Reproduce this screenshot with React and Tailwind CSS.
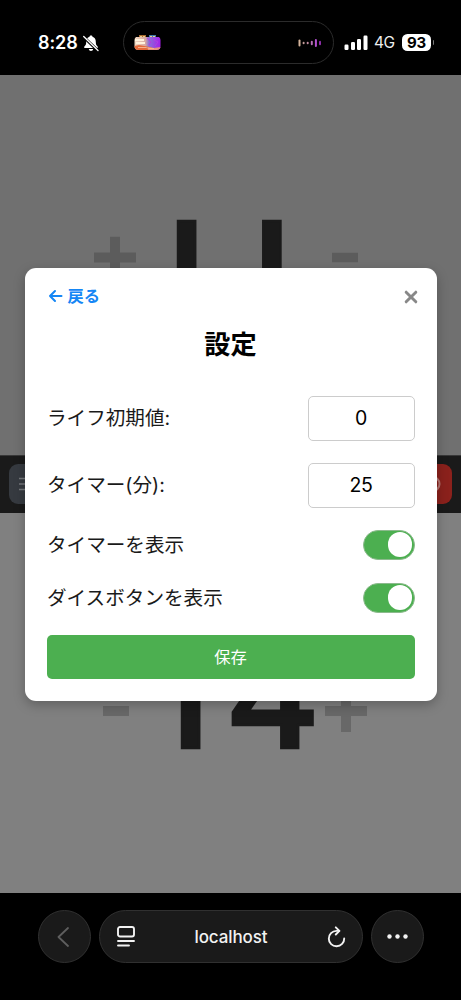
function StatusBar() {
  return (
    <header className="flex h-[75px] shrink-0 items-center bg-black pt-[10px] pl-[38px] text-white">
      <span className="w-[41px] pt-[1px] text-[18px] leading-none font-semibold tracking-[-0.1px]">8:28</span>
      <svg className="ml-[3px] h-[18px] w-[18px]" viewBox="0 0 18 18">
        <path d="M9 1.500c.9 0 1.400.500 1.500 1.200 2.200.800 3.300 2.500 3.300 5 0 2.600.500 3.500 1.800 4.800.700.700.400 1.500-.600 1.500H3c-1 0-1.300-.8-.6-1.500 1.300-1.300 1.800-2.200 1.800-4.800 0-2.500 1.100-4.200 3.300-5C7.600 2 8.100 1.500 9 1.500z" fill="#fff" />
        <path d="M6.800 15h4.400c-.2 1.200-1 2-2.200 2s-2-.8-2.200-2z" fill="#fff" />
        <path d="M1.700 3l14 13.500" stroke="#000" strokeWidth="3" />
        <path d="M1.700 2.500l14.300 14" stroke="#fff" strokeWidth="1.300" strokeLinecap="round" />
      </svg>
      <div className="ml-[23px] flex h-[43px] w-[211px] shrink-0 items-center justify-between rounded-full border border-[#2b2b2b] pr-[11px] pl-[10px]">
        <svg className="h-[16px] w-[27px]" viewBox="0 0 27 16">
          <defs>
            <linearGradient id="art" x1="0" x2="1" y1="0" y2="0">
              <stop offset="0" stopColor="#f3dcc5" />
              <stop offset=".42" stopColor="#d9aaa0" />
              <stop offset=".55" stopColor="#8b6fd8" />
              <stop offset="1" stopColor="#a51be8" />
            </linearGradient>
            <clipPath id="artClip"><rect x=".5" y="1.500" width="26" height="13.500" rx="4" /></clipPath>
          </defs>
          <rect x="5" y="0" width="7" height="4" fill="#a96b2e" />
          <rect x="15" y="0" width="7" height="4" fill="#3e78a8" />
          <g clipPath="url(#artClip)">
            <rect y="2" width="27" height="13" fill="url(#art)" />
            <path d="M0 11l5-1 8 1.500 5 1v3H0z" fill="#e56a3b" />
            <path d="M14 12l6 1 7-1v4H14z" fill="#e8917e" />
            <path d="M4 12.500h8l3 1h5" stroke="#f7b08d" />
            <path d="M13 3l4 4-2 3M20 5l4 2-3 4" stroke="#b23ee0" fill="none" />
            <path d="M1 5h9M2 8h9" stroke="#fff2dc" strokeWidth="2" />
          </g>
          <path d="M6 1.500h5M16 1.500h5" stroke="#e9cf8a" strokeDasharray="2 1" />
        </svg>
        <svg className="h-[10px] w-[24px]" viewBox="0 0 24 10" fill="none" strokeWidth="2" strokeLinecap="round">
          <path d="M1.500 2.500v5" stroke="#d5b49b" />
          <path d="M5.600 4.800v.4" stroke="#c29a98" />
          <path d="M9.700 4.800v.4" stroke="#c28aa0" />
          <path d="M13.800 3.800v2.400" stroke="#b56eb5" />
          <path d="M17.900 2v6" stroke="#b450cf" />
          <path d="M22 3.800v2.400" stroke="#8c2da8" />
        </svg>
      </div>
      <svg className="ml-[10px] h-[16px] w-[24px] shrink-0" viewBox="0 0 24 16" fill="#fff">
        <rect x="0.500" y="9.500" width="4" height="5.500" rx="1.200" />
        <rect x="7" y="7" width="4" height="8" rx="1.200" />
        <rect x="13" y="4" width="4" height="11" rx="1.200" />
        <rect x="19.500" y="0.500" width="4" height="14.500" rx="1.200" />
      </svg>
      <span className="ml-[6px] w-[22px] pt-[1px] text-[15.500px] leading-none tracking-[-0.4px] text-[#eee]">4G</span>
      <span className="ml-[6px] flex h-[17px] w-[29px] shrink-0 items-center justify-center rounded-[5.500px] bg-white text-[15px] leading-none font-bold tracking-[-0.3px] text-black">93</span>
      <span className="ml-[1.500px] h-[5px] w-[1.500px] rounded-r-full bg-[#777]" />
    </header>
  );
}

function PlayerHalf({ life, flipped }) {
  const [first, ...rest] = life;
  return (
    <section
      className={
        flipped
          ? "flex h-[380.5px] shrink-0 rotate-180 items-center justify-center bg-[#707070]"
          : "flex h-[380.5px] shrink-0 items-center justify-center bg-[#808080]"
      }
    >
      <button aria-label="minus" className="flex w-[42px] justify-center pt-[16px]">
        <svg className={flipped ? "h-[10px] w-[26px] text-[#5c5c5c]" : "h-[10px] w-[26px] text-[#686868]"} viewBox="0 0 26 10">
          <path d="M0 0h26v10H0z" fill="currentColor" />
        </svg>
      </button>
      <span
        className={
          flipped
            ? "flex w-[188px] justify-center pr-[9px] pb-[24px] font-['Open_Sans','Noto_Sans',sans-serif] text-[149px] leading-[168px] font-semibold text-[#1a1a1a] [-webkit-text-stroke:2.5px_#1a1a1a]"
            : "flex w-[188px] justify-center pr-[3.5px] pb-[24px] font-['Open_Sans','Noto_Sans',sans-serif] text-[149px] leading-[168px] font-semibold text-[#1a1a1a] [-webkit-text-stroke:2.5px_#1a1a1a]"
        }
      >
        <span className={flipped ? "" : "mr-[2.5px]"}>{first}</span>
        <span>{rest.join("")}</span>
      </span>
      <button aria-label="plus" className="flex w-[42px] justify-center pt-[16px]">
        <svg className={flipped ? "h-[42px] w-[42px] text-[#5c5c5c]" : "h-[42px] w-[42px] text-[#686868]"} viewBox="0 0 42 42">
          <path d="M16 0h10v16h16v10H26v16H16V26H0V16h16z" fill="currentColor" />
        </svg>
      </button>
    </section>
  );
}

function ControlBar() {
  return (
    <div className="flex h-[57px] shrink-0 items-center justify-between bg-[#1a1a1a] px-[9px]">
      <button aria-label="menu" className="flex h-10 w-10 items-center rounded-[9px] bg-[#363a40] pl-[10px]">
        <svg className="h-[16px] w-[20px]" viewBox="0 0 20 16" stroke="#74777b" strokeWidth="1.500">
          <path d="M0 2.500h20M0 8h20M0 13.500h20" />
        </svg>
      </button>
      <button aria-label="reset" className="flex h-10 w-10 items-center justify-end rounded-[9px] bg-[#8b211c] pr-[11px]">
        <svg className="h-[18px] w-[18px]" viewBox="0 0 18 18" fill="none" stroke="#b57773" strokeWidth="2">
          <circle cx="9" cy="9" r="7.500" />
        </svg>
      </button>
    </div>
  );
}

function NumberRow({ label, value }) {
  return (
    <div className="flex h-[45px] items-center justify-between">
      <span className="pt-[1px] pl-[0.5px]">{label}</span>
      <div className="flex h-[45px] w-[107px] items-center justify-center rounded-[5px] border border-[#ccc] pt-[2px] text-[19.500px] tracking-[-0.3px] text-black">
        {value}
      </div>
    </div>
  );
}

function ToggleRow({ label }) {
  return (
    <div className="flex h-[30px] items-center justify-between">
      <span className="pt-[2px] pl-[0.5px]">{label}</span>
      <span className="flex h-[30px] w-[52px] items-center justify-end rounded-full border border-[#8cba8d] bg-[#4caf50] pr-[1.5px]">
        <span className="h-[24.500px] w-[24.500px] rounded-full bg-white" />
      </span>
    </div>
  );
}

function SettingsDialog() {
  return (
    <div role="dialog" className="flex h-[433px] w-[412px] flex-col rounded-[11px] bg-white px-[22px] text-[19.600px] leading-none text-[#1a1a1a] shadow-[0_4px_12px_rgba(0,0,0,0.25)]">
      <div className="flex h-[58px] items-center justify-between">
        <button className="flex items-center gap-[5px] pl-[1px] text-[16.300px] font-semibold text-[#1586f5]">
          <svg className="-mt-[1px] h-[14px] w-[15px]" viewBox="0 0 15 14" fill="none" stroke="currentColor" strokeWidth="2" strokeLinecap="round" strokeLinejoin="round">
            <path d="M13.500 7H2M7 2L2 7l5 5" />
          </svg>
          <span>戻る</span>
        </button>
        <button aria-label="close" className="-mr-[3px] flex h-[14px] w-[14px] items-center justify-center">
          <svg className="h-[14px] w-[14px]" viewBox="0 0 13 13" fill="none" stroke="#888" strokeWidth="2.700" strokeLinecap="round">
            <path d="M2 2l9 9M11 2l-9 9" />
          </svg>
        </button>
      </div>
      <h2 className="flex h-[38px] items-center justify-center pt-[1px] text-[26.200px] font-bold text-black">設定</h2>
      <div className="mt-[32px] flex flex-col gap-[22px]">
        <NumberRow label="ライフ初期値:" value="0" />
        <NumberRow label="タイマー(分):" value="25" />
        <ToggleRow label="タイマーを表示" />
      </div>
      <div className="mt-[23px]">
        <ToggleRow label="ダイスボタンを表示" />
      </div>
      <button className="mt-[22px] flex h-[44px] shrink-0 items-center justify-center rounded-[5px] bg-[#4caf50] pt-[1px] text-[16.300px] text-white">保存</button>
    </div>
  );
}

function BrowserBar() {
  return (
    <footer className="flex h-[107px] shrink-0 items-start bg-black pt-[17px] pl-[38px] text-white">
      <button aria-label="back" className="flex h-[53px] w-[53px] items-center justify-center rounded-full border border-[#303030] bg-[#1a1a1a]">
        <svg className="-ml-[3px] h-[20px] w-[12px]" viewBox="0 0 12 20" fill="none" stroke="#5e5e5e" strokeWidth="1.800" strokeLinecap="round" strokeLinejoin="round">
          <path d="M11 1L1.500 10l9.500 9" />
        </svg>
      </button>
      <div className="ml-[8px] flex h-[53px] w-[264px] items-center justify-between rounded-full border border-[#303030] bg-[#1a1a1a] pr-[16px] pl-[17px]">
        <svg className="h-[21px] w-[18px]" viewBox="0 0 18 21" fill="none" stroke="#f2f2f2" strokeWidth="1.900" strokeLinecap="round">
          <rect x="1" y="1" width="16" height="9.500" rx="2" />
          <path d="M1 15h16M1 19.500h11" />
        </svg>
        <span className="pt-[1px] text-[17px] leading-none font-medium tracking-[-0.1px] text-[#f2f2f2]">localhost</span>
        <svg className="h-[22px] w-[19px]" viewBox="0 0 19 22" fill="none" stroke="#f2f2f2" strokeWidth="1.900" strokeLinecap="round" strokeLinejoin="round">
          <path d="M11.800 4.900H9.500A7.700 7.700 0 1 0 17.200 12.400" />
          <path d="M8.800 1.300l3.600 3.600-3.600 3.600" />
        </svg>
      </div>
      <button aria-label="more" className="ml-[8px] flex h-[53px] w-[53px] items-center justify-center rounded-full border border-[#303030] bg-[#1a1a1a]">
        <svg className="h-[5px] w-[21px]" viewBox="0 0 21 5" fill="#f2f2f2">
          <circle cx="2.500" cy="2.500" r="2.200" />
          <circle cx="10.500" cy="2.500" r="2.200" />
          <circle cx="18.500" cy="2.500" r="2.200" />
        </svg>
      </button>
    </footer>
  );
}

export default function App() {
  return (
    <div className="flex h-[1000px] w-[461px] flex-col overflow-hidden bg-black font-[Inter,'Noto_Sans_CJK_JP',sans-serif]">
      <StatusBar />
      <main className="relative flex h-[818px] shrink-0 flex-col overflow-hidden">
        <PlayerHalf life="11" flipped />
        <ControlBar />
        <PlayerHalf life="14" />
        <div className="absolute inset-0 flex items-center justify-center">
          <SettingsDialog />
        </div>
      </main>
      <BrowserBar />
    </div>
  );
}
